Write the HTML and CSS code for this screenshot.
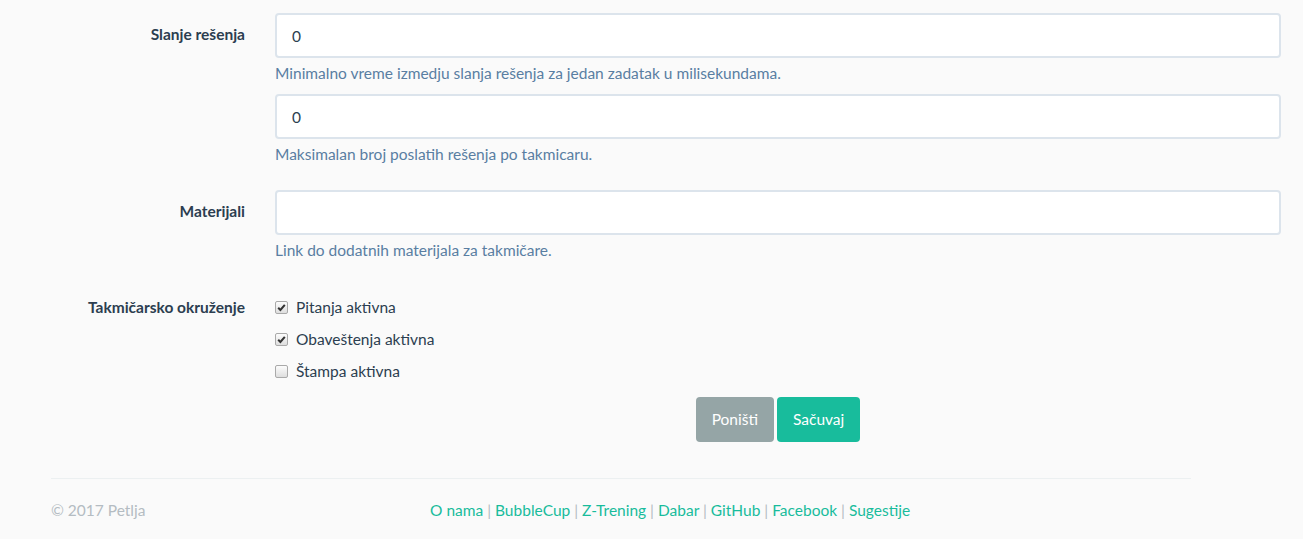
FILE: index.html
```html
<!DOCTYPE html>
<html lang="sr">
<head>
<meta charset="utf-8">
<title>Takmičenje</title>
<link rel="stylesheet" href="styles.css">
</head>
<body>
<form class="form">
  <div class="form-group">
    <label class="control-label">Slanje rešenja</label>
    <div class="controls">
      <input class="form-control" type="text" value="0">
      <p class="help-block">Minimalno vreme izmedju slanja rešenja za jedan zadatak u milisekundama.</p>
      <input class="form-control" type="text" value="0">
      <p class="help-block">Maksimalan broj poslatih rešenja po takmicaru.</p>
    </div>
  </div>
  <div class="form-group">
    <label class="control-label">Materijali</label>
    <div class="controls">
      <input class="form-control" type="text" value="">
      <p class="help-block">Link do dodatnih materijala za takmičare.</p>
    </div>
  </div>
  <div class="form-group">
    <label class="control-label">Takmičarsko okruženje</label>
    <div class="controls">
      <label class="checkbox"><span class="box checked"><svg viewBox="0 0 13 13" width="13" height="13"><path d="M3.2 6.8 L5.4 9 L9.8 3.8" fill="none" stroke="#333" stroke-width="2"/></svg></span>Pitanja aktivna</label>
      <label class="checkbox"><span class="box checked"><svg viewBox="0 0 13 13" width="13" height="13"><path d="M3.2 6.8 L5.4 9 L9.8 3.8" fill="none" stroke="#333" stroke-width="2"/></svg></span>Obaveštenja aktivna</label>
      <label class="checkbox"><span class="box"></span>Štampa aktivna</label>
    </div>
  </div>
  <div class="form-group">
    <div></div>
    <div class="actions">
      <button type="button" class="btn btn-default">Poništi</button>
      <button type="button" class="btn btn-primary">Sačuvaj</button>
    </div>
  </div>
</form>
<footer class="footer">
  <hr>
  <div class="footer-row">
    <div class="copy">© 2017 Petlja</div>
    <div class="links">
      <a href="#">O nama</a> <span class="sep">|</span> <a href="#">BubbleCup</a> <span class="sep">|</span> <a href="#">Z-Trening</a> <span class="sep">|</span> <a href="#">Dabar</a> <span class="sep">|</span> <a href="#">GitHub</a> <span class="sep">|</span> <a href="#">Facebook</a> <span class="sep">|</span> <a href="#">Sugestije</a>
    </div>
  </div>
</footer>
</body>
</html>
```
FILE: styles.css
```css
* { box-sizing: border-box; }
html, body { margin: 0; padding: 0; }
body {
  background: #fafafa;
  color: #2c3e50;
  font-family: "Lato", "Open Sans", sans-serif;
  font-size: 15.5px;
  line-height: 21px;
  padding-top: 13px;
}
.form { width: 1281px; padding-bottom: 15px; }
.form-group {
  display: grid;
  grid-template-columns: 245px 1006px;
  column-gap: 30px;
  margin-bottom: 15px;
}
.form-group:last-child { margin-bottom: 0; }
.control-label {
  text-align: right;
  font-weight: 700;
  padding-top: 11px;
}
.form-control {
  display: block;
  width: 100%;
  height: 45px;
  padding: 10px 15px;
  font: inherit;
  color: #2c3e50;
  background: #fff;
  border: 2px solid #dce4ec;
  border-radius: 4px;
  outline: none;
}
.help-block {
  margin: 5px 0 10px;
  color: #597ea2;
}
.checkbox {
  display: flex;
  align-items: center;
  padding-top: 11px;
  height: 32px;
  line-height: 21px;
}
.box {
  width: 13px;
  height: 13px;
  margin-right: 8px;
  border: 1px solid #a9a9a9;
  border-radius: 2px;
  background: linear-gradient(#fcfcfc, #dedede);
  display: inline-flex;
  position: relative;
}
.box svg { position: absolute; left: -1px; top: -1px; }
.actions {
  display: flex;
  justify-content: center;
  gap: 3px;
}
.btn {
  height: 45px;
  padding: 10px 16px;
  font: inherit;
  color: #fff;
  border: none;
  border-radius: 4px;
}
.btn-default { background: #95a5a6; }
.btn-primary { background: #18bc9c; }
.footer {
  margin-left: 51px;
  width: 1140px;
}
.footer hr {
  margin: 21px 0;
  border: 0;
  border-top: 1px solid #ecf0f1;
}
.footer-row { display: flex; }
.copy { width: 379px; color: #b4bcc2; }
.links a { color: #18bc9c; text-decoration: none; }
.sep { color: #b4bcc2; }
```
